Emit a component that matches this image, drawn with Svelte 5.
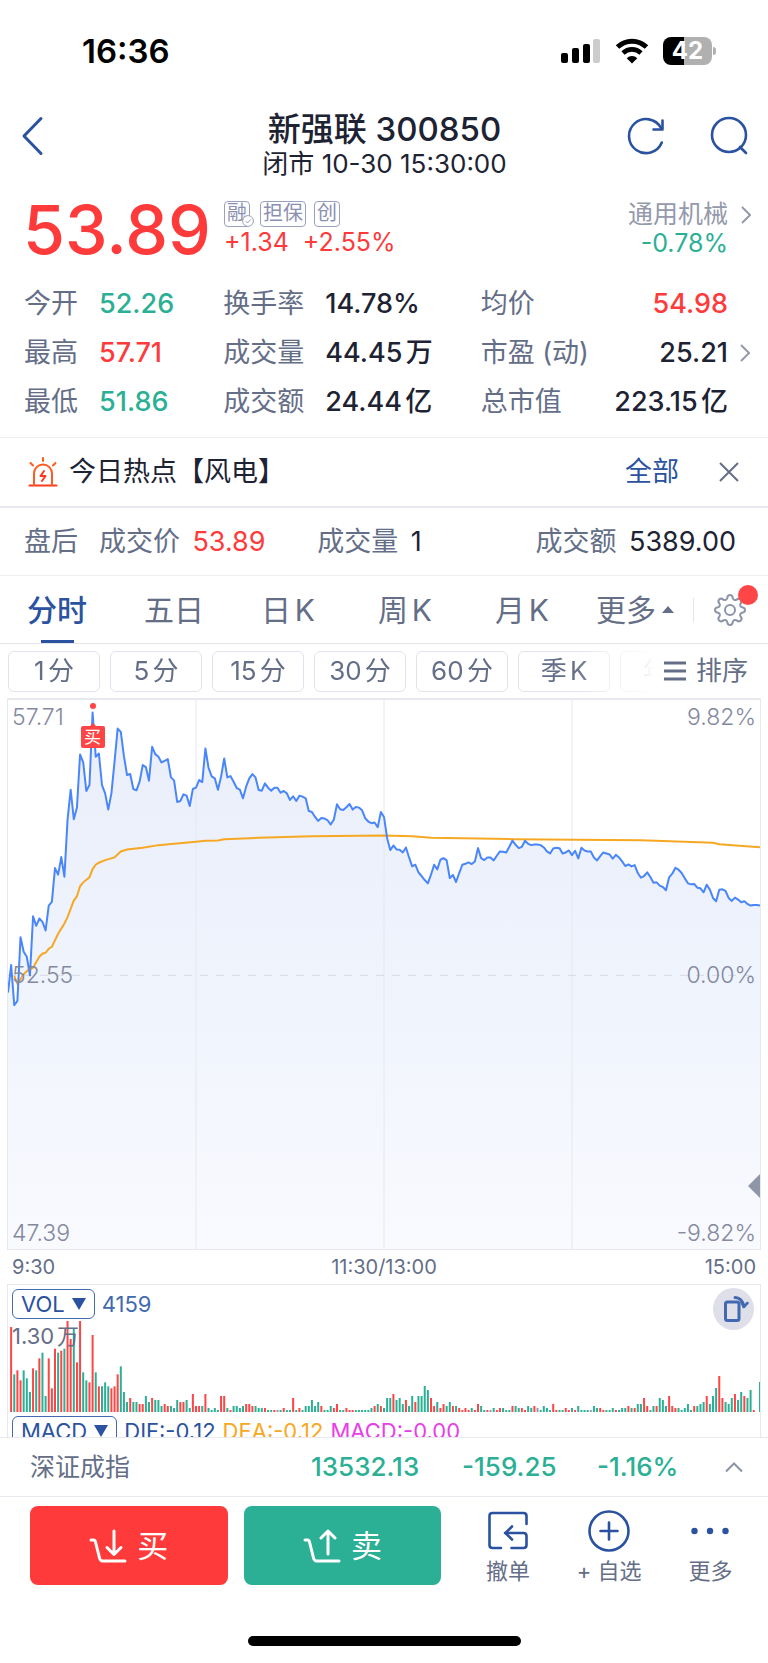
<script>
  const stats = [
    [
      { label: "今开", value: "52.26", tone: "down" },
      { label: "换手率", value: "14.78%" },
      { label: "均价", value: "54.98", tone: "up" },
    ],
    [
      { label: "最高", value: "57.71", tone: "up" },
      { label: "成交量", value: "44.45万" },
      { label: "市盈 (动)", value: "25.21", more: true },
    ],
    [
      { label: "最低", value: "51.86", tone: "down" },
      { label: "成交额", value: "24.44亿" },
      { label: "总市值", value: "223.15亿" },
    ],
  ];

  const tabs = ["分时", "五日", "日K", "周K", "月K", "更多"];
  const periods = ["1分", "5分", "15分", "30分", "60分", "季K", "年K"];
  let tab = "分时";

  // one point per trading minute, chart units (three to a pixel)
  const price = [
    905, 822, 943, 930, 738, 782, 797, 853, 675, 704, 682, 692, 718, 643, 632,
    530, 550, 497, 556, 385, 294, 383, 348, 188, 212, 298, 280, 62, 195, 185,
    280, 305, 354, 305, 210, 110, 120, 193, 250, 247, 292, 296, 270, 220, 226,
    267, 165, 187, 195, 212, 207, 202, 257, 266, 331, 328, 308, 312, 343, 292,
    288, 265, 271, 170, 228, 254, 260, 294, 255, 200, 257, 253, 270, 289, 294,
    320, 285, 260, 247, 257, 295, 297, 275, 288, 297, 288, 288, 303, 298, 305,
    325, 314, 328, 312, 315, 320, 358, 361, 376, 388, 379, 381, 386, 399, 384,
    338, 353, 355, 347, 337, 354, 346, 348, 356, 380, 390, 395, 393, 407, 361,
    376, 440, 476, 462, 474, 475, 483, 468, 498, 525, 520, 543, 554, 566, 576,
    550, 520, 534, 505, 500, 507, 560, 551, 572, 545, 520, 517, 513, 518, 510,
    470, 500, 506, 498, 498, 507, 493, 480, 481, 483, 466, 447, 460, 470, 466,
    448, 457, 461, 459, 459, 461, 468, 480, 486, 471, 469, 470, 486, 483, 477,
    491, 478, 501, 469, 477, 480, 480, 498, 507, 494, 483, 486, 489, 502, 490,
    498, 510, 524, 519, 525, 521, 545, 559, 554, 543, 557, 574, 573, 583, 587,
    597, 558, 547, 529, 535, 545, 561, 576, 579, 578, 589, 591, 603, 580, 595,
    620, 630, 595, 594, 599, 620, 629, 619, 625, 633, 630, 638, 643, 641, 641,
    643,
  ];

  const average = [
    [2, 855], [3, 878], [4, 865], [5, 850], [6, 840], [8, 830], [10, 797],
    [11, 788], [12, 785], [13, 773], [14, 767], [16, 728], [18, 697], [19, 678],
    [21, 628], [22, 615], [23, 585], [24, 573], [26, 558], [27, 533], [28, 520],
    [29, 514], [31, 506], [34, 498], [36, 480], [38, 474], [43, 469], [48, 461],
    [53, 457], [60, 451], [63, 448], [67, 447], [69, 443], [80, 439], [97, 434],
    [120, 432], [129, 434], [135, 439], [161, 443], [202, 446], [225, 454],
    [227, 458], [240, 467],
  ];

  // r = rising, g = falling, n = flat
  const volume = `
    r255 g113 r125 r95 g125 g101 g60 r131 g125 r161 g178 g48 r161 r71 r190
    g178 r184 g190 r273 r219 g250 r149 r273 g119 g95 r89 r231 g119 r77 g77
    g89 g77 r71 r77 r113 g137 g60 g30 r42 g30 g30 r24 r24 g48 g30 r42 g36 g36
    g18 r24 r18 g18 g12 g36 r30 r30 g36 g12 r54 r18 r18 g18 r54 g12 g6 g12 g6
    r48 r48 g12 r6 g18 g18 g12 g18 r24 r24 r18 g18 g12 g12 r12 g6 g6 r6 n6 g6
    r12 g6 g6 r42 g6 r12 g6 g18 g18 g36 g18 g30 r18 g6 g6 g18 r12 r24 g6 g6
    r12 r6 r6 g6 g6 g6 g6 g6 g12 r18 g24 r18 g12 g42 g42 r54 g36 g42 g24 r36
    g18 g48 r30 g48 g48 g78 g66 r42 r18 g30 r12 r24 g18 g30 r18 g18 r12 r6 r12
    r6 g12 r6 r24 g18 g6 r6 n6 g12 r6 r12 g12 g6 g6 r18 g18 g12 r12 r6 g18 g12
    r18 n12 g6 g18 g12 g6 r24 r6 g6 g6 r12 r6 g12 r6 g18 g6 g6 g6 n6 g18 g12
    r12 r6 g6 g6 g12 r6 g6 g12 g12 r18 g12 r12 g24 g24 r42 r18 g6 g18 r18
    g42 g36 g18 r48 r18 r12 g12 g6 g12 g24 g6 r18 g18 g24 g30 r48 g24 g48 g72
    r108 r42 g30 g24 g42 r54 g36 g60 r48 g42 g66 r6 n0 g90`
    .trim()
    .split(/\s+/)
    .map((bar, i) => ({ x: i + 1, kind: bar[0], h: Number(bar.slice(1)) }));

  const pricePoints = price.map((y, i) => `${i},${y}`).join(" ");
  const averagePoints = average.map((p) => p.join(",")).join(" ");
</script>

<svelte:head><title>新强联 300850</title></svelte:head>

<div class="page">
  <div class="status">
    <span class="clock">16:36</span>
    <div class="signals">
      <svg width="40" height="26" viewBox="0 0 40 26">
        <rect x="0" y="15" width="7" height="10" rx="2" />
        <rect x="11" y="10" width="7" height="15" rx="2" />
        <rect x="22" y="6" width="7" height="19" rx="2" />
        <rect x="32" y="1" width="7" height="24" rx="2" fill="#ccc" />
      </svg>
      <svg width="34" height="26" viewBox="0 0 34 26">
        <path d="M2.500 9a21 21 0 0 1 29 0" fill="none" stroke="#000" stroke-width="5" />
        <path d="M8 15a13 13 0 0 1 18 0" fill="none" stroke="#000" stroke-width="4.600" />
        <path d="M17 25.500l-5.300-5.300a7.500 7.500 0 0 1 10.600 0z" />
      </svg>
      <span class="battery">42</span>
    </div>
  </div>

  <header>
    <button class="icon" aria-label="返回">
      <svg width="24" height="40" viewBox="0 0 24 40">
        <path d="M21 2.500 4 20l17 17.500" class="line" stroke-width="3" />
      </svg>
    </button>
    <div class="title">
      <h1>新强联 300850</h1>
      <p>闭市 10-30 15:30:00</p>
    </div>
    <div class="tools">
      <button class="icon" aria-label="刷新">
        <svg width="40" height="40" viewBox="0 0 40 40">
          <path d="M35.800 26.500A17 17 0 1 1 35 12" class="line" stroke-width="2.600" />
          <path d="M36.500 4.500v9h-9" class="line" stroke-width="2.600" />
        </svg>
      </button>
      <button class="icon" aria-label="搜索">
        <svg width="40" height="40" viewBox="0 0 40 40">
          <circle cx="20" cy="19" r="17" class="line" stroke-width="2.600" />
          <path d="m31 31 6 6" class="line" stroke-width="2.600" />
        </svg>
      </button>
    </div>
  </header>

  <section class="quote">
    <strong class="last up">53.89</strong>
    <div class="change">
      <div class="badges">
        <span class="badge">融
          <svg class="tick" width="12" height="12" viewBox="0 0 12 12">
            <circle cx="6" cy="6" r="5.400" fill="#fff" stroke="#9aa0bd" />
            <path d="m3.500 6 2 2 3.200-3.500" fill="none" stroke="#9aa0bd" />
          </svg>
        </span>
        <span class="badge">担保</span>
        <span class="badge">创</span>
      </div>
      <div class="moves up"><span>+1.34</span><span>+2.55%</span></div>
    </div>
    <a class="industry" href="#industry">
      <span class="name">通用机械</span>
      <svg width="10" height="20" viewBox="0 0 10 20">
        <path d="m1 2 8 8-8 8" fill="none" stroke="#9499ab" stroke-width="2" />
      </svg>
      <span class="down">-0.78%</span>
    </a>
  </section>

  <section class="stats">
    {#each stats as row}
      {#each row as s}
        <div class="stat">
          <span class="label">{s.label}</span>
          <span class="value {s.tone ?? ''}">{s.value}</span>
        </div>
      {/each}
      <div class="more">
        {#if row[2].more}
          <svg width="10" height="20" viewBox="0 0 10 20">
            <path d="m1 2 8 8-8 8" fill="none" stroke="#9499ab" stroke-width="2" />
          </svg>
        {/if}
      </div>
    {/each}
  </section>

  <section class="hot">
    <svg width="30" height="30" viewBox="0 0 30 30">
      <g fill="none" stroke="#ff5a1f" stroke-width="2" stroke-linecap="round" stroke-linejoin="round">
        <path d="M1.500 28.500h27" stroke="#ff3b1f" />
        <path d="M6 28V16.500a9 9 0 0 1 18 0V28" />
        <path d="M15 1v3M2.500 6 5 8.500M27.500 6 25 8.500" />
        <path d="m16 14-3.500 5h5L14 24" stroke="#ff3b1f" />
      </g>
    </svg>
    <span class="headline">今日热点【风电】</span>
    <a href="#all">全部</a>
    <button class="icon" aria-label="关闭">
      <svg width="20" height="20" viewBox="0 0 20 20">
        <path d="m1 1 18 18M19 1 1 19" fill="none" stroke="#646e87" stroke-width="2" />
      </svg>
    </button>
  </section>

  <section class="after">
    <span class="label">盘后</span>
    <span><span class="label">成交价</span><span class="up">53.89</span></span>
    <span><span class="label">成交量</span>1</span>
    <span class="end"><span class="label">成交额</span>5389.00</span>
  </section>

  <nav class="tabs">
    <div class="tablist">
      {#each tabs as t}
        <button class="tab" class:active={t === tab} on:click={() => (tab = t)}>
          {t}
          {#if t === "更多"}
            <svg width="12" height="7" viewBox="0 0 12 7"><path d="M0 7 6 0l6 7z" fill="#646e87" /></svg>
          {/if}
        </button>
      {/each}
    </div>
    <button class="icon gear" aria-label="设置">
      <svg width="32" height="32" viewBox="0 0 32 32">
        <g fill="none" stroke="#8d94a8" stroke-width="2" stroke-linejoin="round">
          <path
            d="M13.200 4.200Q13.600 1 16 1t2.800 3.200q.4 1.400 1.800 1.800 1 .3 2-.4 2.500-1.900 4.200-.2t-.2 4.200q-.7 1-.4 2 .5 1.400 1.800 1.600Q31 13.600 31 16t-3 2.800q-1.400.3-1.800 1.600-.3 1 .4 2 1.900 2.500.2 4.200t-4.200-.2q-1-.7-2-.4-1.400.5-1.800 1.800Q18.400 31 16 31t-2.800-3.200q-.4-1.300-1.800-1.800-1-.3-2 .4-2.500 1.900-4.200.2t.2-4.200q.7-1 .4-2-.4-1.300-1.800-1.600Q1 18.400 1 16t3-2.800q1.400-.3 1.800-1.600.3-1-.4-2-1.900-2.500-.2-4.200t4.200.2q1 .7 2 .4 1.400-.4 1.800-1.800z"
          />
          <circle cx="16" cy="16" r="5" />
        </g>
      </svg>
      <span class="dot"></span>
    </button>
  </nav>

  <div class="periods">
    <div class="chips">
      {#each periods as p}
        <button class="chip">{p}</button>
      {/each}
    </div>
    <button class="sort">
      <svg width="22" height="20" viewBox="0 0 22 20">
        <path d="M0 2h22M0 10h22M0 18h22" stroke="#646e87" stroke-width="3" />
      </svg>
      排序
    </button>
  </div>

  <div class="charts">
    <div class="chart">
      <svg viewBox="0 24 240 1653" preserveAspectRatio="none">
        <defs>
          <linearGradient id="fade" x1="0" y1="0" x2="0" y2="1">
            <stop offset="0" stop-color="#e9eefa" />
            <stop offset="0.550" stop-color="#f0f4fd" />
            <stop offset="1" stop-color="#f9fafe" />
          </linearGradient>
        </defs>
        <polygon points="0,1677 {pricePoints} 240,1677" fill="url(#fade)" />
        <path d="M60 24v1653M120 24v1653M180 24v1653" class="grid" />
        <path d="M0 853H240" class="zero" />
        <polyline points={averagePoints} class="average" />
        <polyline points={pricePoints} class="price" />
      </svg>
      <span class="mark tl">57.71</span>
      <span class="mark tr">9.82%</span>
      <span class="mark ml">52.55</span>
      <span class="mark mr">0.00%</span>
      <span class="mark bl">47.39</span>
      <span class="mark br">-9.82%</span>
      <div class="bought">
        <i></i>
        <span>买</span>
      </div>
      <svg class="handle" width="12" height="24" viewBox="0 0 12 24">
        <path d="M12 0v24L0 12z" />
      </svg>
    </div>

    <div class="times"><span>9:30</span><span>11:30/13:00</span><span>15:00</span></div>

    <div class="panel volume">
      <div class="legend">
        <button class="picker">
          VOL
          <svg width="14" height="12" viewBox="0 0 14 12"><path d="M0 0h14L7 12z" /></svg>
        </button>
        <span class="count">4159</span>
      </div>
      <div class="bars">
        <svg viewBox="0 0 240 273" preserveAspectRatio="none">
          {#each volume as v}
            <path d="M{v.x} 273v-{v.h}" class={v.kind} />
          {/each}
        </svg>
        <span class="scale">1.30万</span>
      </div>
      <button class="rotate" aria-label="横屏">
        <svg width="41" height="42" viewBox="0 0 41 42">
          <g fill="none" stroke="#4169b0" stroke-width="3" stroke-linecap="round" stroke-linejoin="round">
            <rect x="12.500" y="14" width="13.500" height="18.500" rx="2" />
            <path d="M22 9.500c5 0 7.500 3 9 9" />
            <path d="m30.500 19 4-4M30.500 18.500l-2-4" stroke-width="2.500" />
          </g>
        </svg>
      </button>
    </div>

    <div class="panel macd">
      <div class="legend">
        <button class="picker">
          MACD
          <svg width="14" height="12" viewBox="0 0 14 12"><path d="M0 0h14L7 12z" /></svg>
        </button>
        <span class="dif">DIF:-0.12</span>
        <span class="dea">DEA:-0.12</span>
        <span class="hist">MACD:-0.00</span>
      </div>
    </div>
  </div>

  <div class="index">
    <span class="label">深证成指</span>
    <span>13532.13</span>
    <span>-159.25</span>
    <span>-1.16%</span>
    <button class="icon" aria-label="展开">
      <svg width="20" height="12" viewBox="0 0 20 12">
        <path d="m2 10.500 8-8 8 8" fill="none" stroke="#8d94a8" stroke-width="2" />
      </svg>
    </button>
  </div>

  <footer>
    <button class="trade buy">
      <svg width="38" height="34" viewBox="0 0 38 34">
        <g fill="none" stroke="#fff" stroke-width="3" stroke-linecap="round" stroke-linejoin="round">
          <path d="M2 11h2.500q1.500 0 2 2l4 16q.8 3 3 3H36" />
          <path d="M25 2v23M18 18.500l7 7 7-7" />
        </g>
      </svg>
      买
    </button>
    <button class="trade sell">
      <svg width="38" height="34" viewBox="0 0 38 34">
        <g fill="none" stroke="#fff" stroke-width="3" stroke-linecap="round" stroke-linejoin="round">
          <path d="M2 11h2.500q1.500 0 2 2l4 16q.8 3 3 3H36" />
          <path d="M25 25V2M18 9l7-7 7 7" />
        </g>
      </svg>
      卖
    </button>
    <div class="links">
      <button>
        <svg width="42" height="42" viewBox="0 0 42 42">
          <g class="line" stroke-width="2.600">
            <path d="M39.500 14V6q0-3-3-3h-31q-3 0-3 3v29q0 3 3 3H14" />
            <path d="M24.500 38h12q3 0 3-3V26q0-3-3-3H18" />
            <path d="m25 16.500-6.500 6.500 6.500 6.500" />
          </g>
        </svg>
        撤单
      </button>
      <button>
        <svg width="42" height="42" viewBox="0 0 42 42">
          <circle cx="21" cy="21" r="19.500" class="line" stroke-width="2.600" />
          <path d="M12.500 21h17M21 12.500v17" class="line" stroke-width="2.600" />
        </svg>
        <span>+ 自选</span>
      </button>
      <button>
        <svg width="42" height="42" viewBox="0 0 42 42">
          <g fill="#2a52a0">
            <circle cx="5.500" cy="21" r="3.200" />
            <circle cx="21" cy="21" r="3.200" />
            <circle cx="36.500" cy="21" r="3.200" />
          </g>
        </svg>
        更多
      </button>
    </div>
  </footer>
  <div class="home"></div>
</div>

<style>
  :global(body) {
    margin: 0;
    background: #fff;
  }
  .page {
    font-family: Inter, "Noto Sans CJK SC", sans-serif;
    font-size: 26px;
    line-height: 32px;
    color: #1d2333;
    text-autospace: normal;
    overflow: hidden;
  }
  button {
    font: inherit;
    color: inherit;
    background: none;
    border: 0;
    padding: 0;
    cursor: pointer;
    text-autospace: inherit;
  }
  a {
    color: inherit;
    text-decoration: none;
  }
  svg {
    display: block;
    flex: none;
  }
  .line {
    fill: none;
    stroke: #2a52a0;
    stroke-linecap: round;
    stroke-linejoin: round;
  }
  .up {
    color: #fe3a3b;
  }
  .down {
    color: #2baf95;
  }
  .label {
    color: #646e87;
    font-weight: 400;
  }

  .status {
    display: flex;
    justify-content: space-between;
    align-items: center;
    height: 102px;
    padding: 0 56px 0 82px;
    color: #000;
  }
  .clock {
    font-size: 33px;
    font-weight: 600;
  }
  .signals {
    display: flex;
    align-items: center;
    gap: 14px;
  }
  .battery {
    position: relative;
    width: 49px;
    height: 28px;
    border-radius: 8px;
    background: linear-gradient(90deg, #000 42%, #b0b0b0 42%);
    color: #fff;
    font-size: 24px;
    line-height: 28px;
    font-weight: 700;
    text-align: center;
  }
  .battery::after {
    content: "";
    position: absolute;
    left: 50px;
    top: 10px;
    width: 3px;
    height: 8px;
    border-radius: 0 4px 4px 0;
    background: #b0b0b0;
  }

  header {
    display: grid;
    grid-template-columns: 1fr auto 1fr;
    align-items: start;
    height: 78px;
    padding: 8px 19px 0 20px;
  }
  header .icon {
    padding-top: 6px;
    justify-self: start;
  }
  .title {
    text-align: center;
  }
  h1 {
    margin: 0;
    font-size: 33px;
    line-height: 38px;
    font-weight: 500;
  }
  p {
    margin: 0;
    font-size: 26px;
  }
  .tools {
    display: flex;
    justify-content: flex-end;
    gap: 43px;
  }

  .quote {
    display: flex;
    align-items: center;
    height: 82px;
    padding: 0 17px 0 23px;
  }
  .last {
    width: 201px;
    font-size: 68px;
    line-height: 80px;
    font-weight: 500;
  }
  .change {
    flex: 1;
  }
  .badges {
    display: flex;
    gap: 8px;
  }
  .badge {
    position: relative;
    border: 1px solid #9aa0bd;
    border-radius: 4px;
    padding: 0 2px;
    height: 24px;
    font-size: 20px;
    line-height: 23px;
    color: #8a90b0;
  }
  .badge:first-child {
    margin-right: 2px;
  }
  .tick {
    position: absolute;
    right: -5px;
    bottom: -1px;
  }
  .moves {
    display: flex;
    gap: 14px;
    font-size: 25px;
    line-height: 30px;
  }
  .industry {
    display: grid;
    grid-template-columns: auto 10px;
    column-gap: 13px;
    align-items: center;
    text-align: right;
    font-size: 25px;
    line-height: 29px;
  }
  .name {
    color: #9499ab;
  }

  .stats {
    display: grid;
    grid-template-columns: 199fr 257fr 247fr 25px;
    grid-auto-rows: 49px;
    align-items: center;
    padding: 9px 15px 11px 24px;
    border-bottom: 1px solid #eeeef2;
  }
  .stat {
    display: flex;
    align-items: center;
    white-space: nowrap;
    font-size: 27px;
  }
  .value {
    font-weight: 500;
  }
  .stat:nth-child(4n + 1) .label {
    width: 75px;
  }
  .stat:nth-child(4n + 2) .label {
    width: 102px;
  }
  .stat:nth-child(4n + 3) {
    justify-content: space-between;
  }
  .more {
    padding-left: 12px;
  }

  .hot {
    display: flex;
    align-items: center;
    height: 68px;
    padding: 0 29px 0 28px;
    border-bottom: 2px solid #e8e9ee;
    font-size: 27px;
  }
  .headline {
    flex: 1;
    padding-left: 11px;
  }
  .hot a {
    color: #2a52a0;
    padding-right: 40px;
  }

  .after {
    display: grid;
    grid-template-columns: 75fr 218fr 218fr 200fr;
    align-items: center;
    height: 67px;
    padding: 0 32px 0 24px;
    border-bottom: 1px solid #eeeef2;
    font-size: 27px;
    white-space: nowrap;
  }
  .after span .label {
    padding-right: 9px;
  }
  .end {
    justify-self: end;
  }

  .tabs {
    display: flex;
    align-items: stretch;
    height: 67px;
    border-bottom: 1px solid #e4e5eb;
  }
  .tablist {
    flex: 1;
    display: grid;
    grid-template-columns: repeat(4, 117fr) 101fr 97fr;
    padding-left: 27px;
  }
  .tab {
    position: relative;
    justify-self: start;
    display: flex;
    align-items: center;
    gap: 6px;
    font-size: 30px;
    color: #646e87;
  }
  .active {
    color: #2a52a0;
    font-weight: 500;
  }
  .active::after {
    content: "";
    position: absolute;
    left: calc(50% - 16px);
    bottom: 0;
    width: 33px;
    height: 3px;
    background: #2a52a0;
  }
  .gear {
    position: relative;
    align-self: center;
    padding: 0 22px 0 20px;
    border-left: 1px solid #e4e5eb;
    height: 24px;
    display: flex;
    align-items: center;
  }
  .dot {
    position: absolute;
    right: 10px;
    top: -13px;
    width: 20px;
    height: 20px;
    border-radius: 50%;
    background: #ff4646;
  }

  .periods {
    display: flex;
    align-items: center;
    height: 54px;
    padding: 0 20px 0 8px;
  }
  .chips {
    flex: 1;
    min-width: 0;
    display: flex;
    gap: 10px;
    overflow: hidden;
    mask-image: linear-gradient(90deg, #000 calc(100% - 80px), transparent);
  }
  .chip {
    flex: none;
    box-sizing: border-box;
    width: 92px;
    height: 41px;
    border: 1px solid #e1e3ec;
    border-radius: 6px;
    color: #646e87;
  }
  .sort {
    display: flex;
    align-items: center;
    gap: 10px;
    padding-left: 10px;
    color: #646e87;
  }

  .charts {
    margin: 0 8px;
  }
  .chart {
    position: relative;
    border: 1px solid #e8e9ee;
    border-top-width: 2px;
    margin: 0 -1px;
  }
  .chart > svg:first-child {
    width: 100%;
    height: 549px;
  }
  .chart path,
  .chart polyline {
    fill: none;
    vector-effect: non-scaling-stroke;
  }
  .grid {
    stroke: #e6e8ee;
    stroke-width: 1px;
  }
  .zero {
    stroke: #d6d9e4;
    stroke-width: 1px;
    stroke-dasharray: 8 8;
  }
  .average {
    stroke: #f7a823;
    stroke-width: 2px;
  }
  .price {
    stroke: #4a86fb;
    stroke-width: 2px;
    stroke-linejoin: round;
  }
  .mark {
    position: absolute;
    font-size: 23px;
    line-height: 28px;
    font-weight: 300;
    color: #8489a0;
  }
  .tl,
  .ml,
  .bl {
    left: 4px;
  }
  .tr,
  .mr,
  .br {
    right: 4px;
  }
  .tl,
  .tr {
    top: 3px;
  }
  .ml,
  .mr {
    top: calc(50% - 14px);
  }
  .bl,
  .br {
    bottom: 2px;
  }
  .bought {
    position: absolute;
    top: 3px;
    left: calc(11.25% - 12px);
    width: 24px;
    display: flex;
    flex-direction: column;
    align-items: center;
  }
  .bought i {
    width: 6px;
    height: 6px;
    border-radius: 50%;
    background: #fe4444;
  }
  .bought span {
    position: relative;
    width: 24px;
    height: 22px;
    margin-top: 17px;
    border-radius: 2px;
    background: #fe4444;
    color: #fff;
    font-size: 17px;
    line-height: 22px;
    text-align: center;
  }
  .bought span::before {
    content: "";
    position: absolute;
    left: 9px;
    top: -3px;
    border: 3px solid transparent;
    border-top: 0;
    border-bottom-color: #fe4444;
  }
  .handle {
    position: absolute;
    right: 0;
    bottom: 51px;
  }
  .chart .handle path {
    fill: #8f96a8;
  }

  .times {
    display: grid;
    grid-template-columns: 1fr auto 1fr;
    padding: 0 4px;
    font-size: 20px;
    line-height: 34px;
    color: #646e87;
  }
  .times span:last-child {
    text-align: right;
  }

  .panel {
    position: relative;
    border: 1px solid #e8e9ee;
    border-width: 1px 1px 0;
    margin: 0 -1px;
  }
  .volume {
    padding-top: 3px;
  }
  .legend {
    display: flex;
    align-items: center;
    gap: 7px;
    padding-left: 4px;
    font-size: 22px;
    white-space: nowrap;
  }
  .picker {
    display: flex;
    align-items: center;
    gap: 7px;
    height: 30px;
    padding: 0 8px;
    border: 1px solid #4169b0;
    border-radius: 6px;
    color: #2a52a0;
  }
  .picker path {
    fill: #2a52a0;
  }
  .count {
    color: #4169b0;
  }
  .bars {
    position: relative;
    padding-top: 1px;
  }
  .bars svg {
    width: 100%;
    height: 91px;
  }
  .bars path {
    stroke-width: 2px;
    vector-effect: non-scaling-stroke;
  }
  .r {
    stroke: #fe4444;
  }
  .g {
    stroke: #2baf95;
  }
  .n {
    stroke: #9499ab;
  }
  .scale {
    position: absolute;
    left: 4px;
    top: 0;
    font-size: 22px;
    color: #646e87;
  }
  .rotate {
    position: absolute;
    right: 6px;
    top: 3px;
    border-radius: 50%;
    background: #dedfe8;
  }
  .macd {
    height: 22px;
    padding-top: 3px;
    overflow: hidden;
    border-top: 0;
  }
  .dif {
    color: #2a52a0;
  }
  .dea {
    color: #f7a823;
  }
  .hist {
    color: #e83ee8;
  }

  .index {
    display: grid;
    grid-template-columns: 281fr 151fr 135fr 127fr 20px;
    align-items: center;
    height: 58px;
    padding: 0 24px 0 30px;
    border: 1px solid #e8e9ee;
    border-width: 1px 0;
    font-weight: 500;
    color: #2baf95;
  }
  .index .label {
    font-size: 25px;
  }

  footer {
    display: grid;
    grid-template-columns: 198fr 198fr 304fr;
    gap: 16px;
    padding: 9px 7px 0 30px;
  }
  .trade {
    display: flex;
    align-items: center;
    justify-content: center;
    gap: 10px;
    height: 79px;
    border-radius: 8px;
    font-size: 31px;
    color: #fff;
  }
  .buy {
    background: #fe3a3b;
  }
  .sell {
    background: #2baf95;
  }
  .links {
    display: grid;
    grid-template-columns: repeat(3, 1fr);
  }
  .links button {
    display: flex;
    flex-direction: column;
    align-items: center;
    gap: 3px;
    padding-top: 4px;
    font-size: 22px;
    color: #646e87;
  }
  .home {
    width: 273px;
    height: 10px;
    margin: 49px auto 17px;
    border-radius: 5px;
    background: #000;
  }
</style>
